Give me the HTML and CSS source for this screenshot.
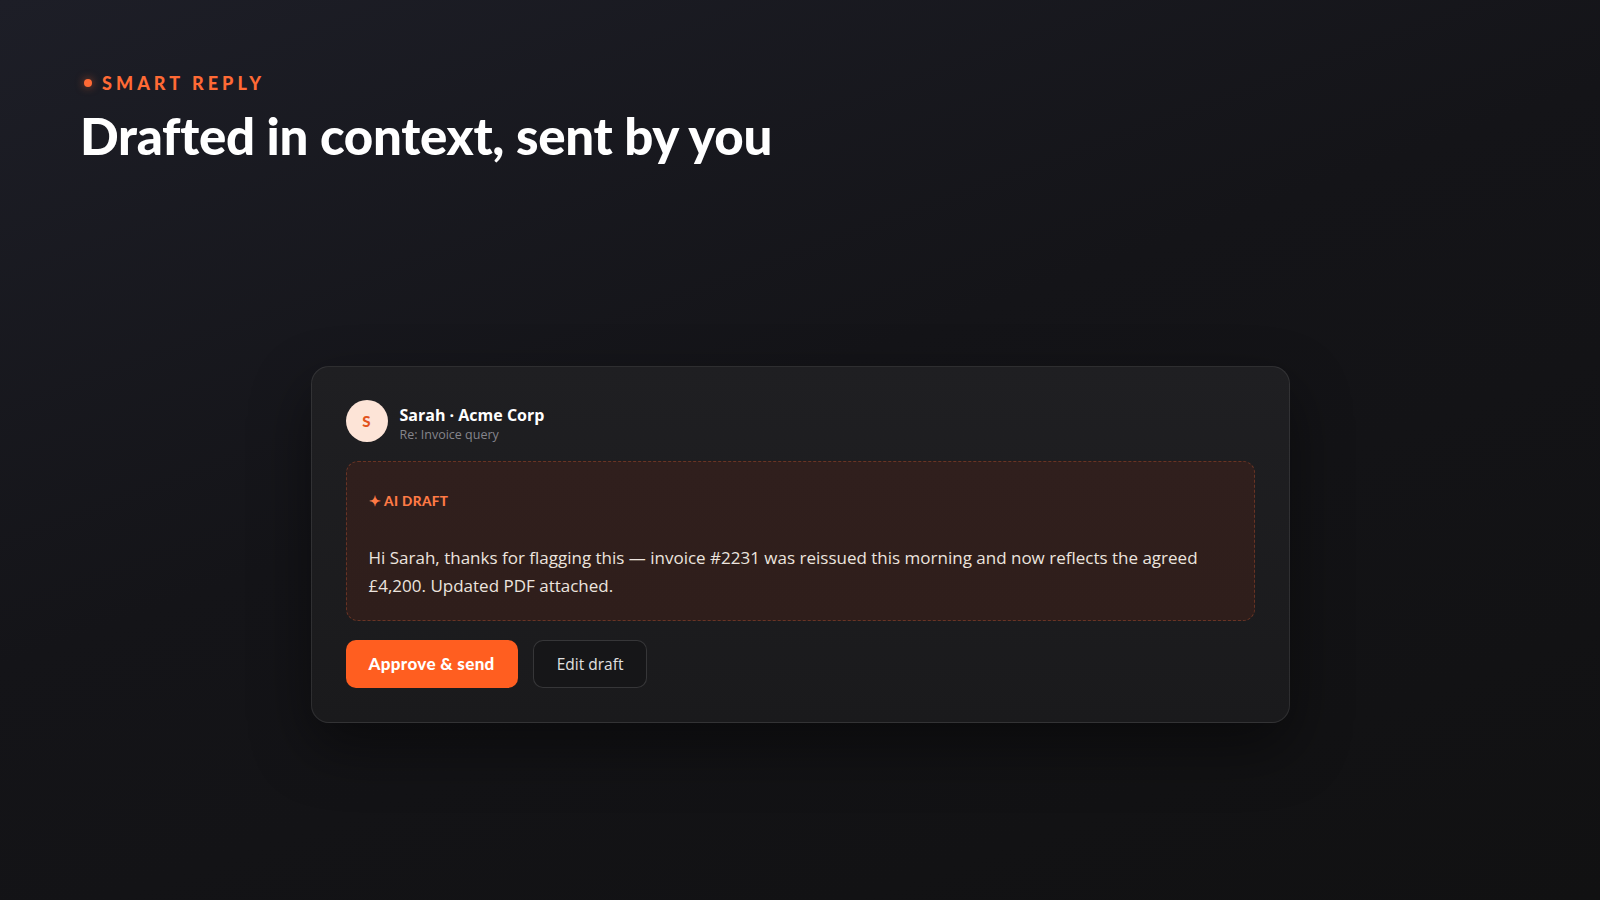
FILE: index.html
```html
<!DOCTYPE html>
<html lang="en">
<head>
    <meta charset="UTF-8">
    <meta name="viewport" content="width=device-width, initial-scale=1.0">
    <title>Smart Reply</title>
    <link rel="stylesheet" href="styles.css">
</head>
<body>

<div class="page">
    <!-- Section heading -->
    <header class="intro">
        <div class="eyebrow"><span class="eyebrow-dot"></span>SMART REPLY</div>
        <h1>Drafted in context, sent by you</h1>
    </header>

    <main class="stage">
        <div class="reply-card">
            <div class="sender">
                <div class="avatar">S</div>
                <div class="sender-info">
                    <div class="sender-name">Sarah · Acme Corp</div>
                    <div class="sender-subject">Re: Invoice query</div>
                </div>
            </div>

            <div class="draft">
                <div class="draft-label">✦ AI DRAFT</div>
                <p class="draft-text">Hi Sarah, thanks for flagging this — invoice #2231 was reissued this morning and now reflects the agreed £4,200. Updated PDF attached.</p>
            </div>

            <div class="actions">
                <button class="btn btn-primary">Approve &amp; send</button>
                <button class="btn btn-ghost">Edit draft</button>
            </div>
        </div>
    </main>
</div>

</body>
</html>
```

FILE: styles.css
```css
/* Base page */
html, body {
    height: 100%;
}

body {
    margin: 0;
    font-family: "Open Sans", "Noto Sans", sans-serif;
    color: #f2f2f2;
    background: linear-gradient(160deg, #1d1e27 0%, #141418 45%, #111112 100%);
}

.page {
    height: 100%;
    box-sizing: border-box;
    padding: 72px 80px 0;
    display: flex;
    flex-direction: column;
}

/* Heading block */
.eyebrow {
    display: flex;
    align-items: center;
    gap: 10px;
    font-family: Lato, sans-serif;
    font-weight: 900;
    font-size: 18px;
    letter-spacing: 0.225em;
    color: #ff6a35;
    line-height: 22px;
}

.eyebrow-dot {
    width: 8px;
    height: 8px;
    border-radius: 50%;
    background: #ff6a35;
    margin-left: 4px;
    box-shadow: 0 0 8px rgba(255, 106, 53, 0.6);
}

h1 {
    margin: 12px 0 0;
    font-family: Lato, sans-serif;
    font-weight: 900;
    font-size: 51px;
    line-height: 60px;
    letter-spacing: -0.006em;
    color: #ffffff;
}

/* Card area */
.stage {
    flex: 1;
    display: flex;
    justify-content: center;
    align-items: center;
    padding-top: 22px;
}

.reply-card {
    width: 909px;
    padding: 31px 34px 34px;
    background: linear-gradient(180deg, #1f1f22 0%, #1a1a1c 100%);
    border: 1px solid rgba(255, 255, 255, 0.09);
    border-radius: 18px;
    box-shadow: 0 24px 60px rgba(0, 0, 0, 0.45);
}

.sender {
    display: flex;
    align-items: center;
    gap: 12px;
}

.sender-info {
    padding-top: 6px;
}

.avatar {
    width: 42px;
    height: 42px;
    border-radius: 50%;
    background: #fde4d7;
    color: #e2531d;
    font-family: Lato, sans-serif;
    font-weight: 900;
    font-size: 15px;
    display: flex;
    align-items: center;
    justify-content: center;
}

.sender-name {
    font-weight: 700;
    font-size: 16px;
    line-height: 22px;
    color: #ffffff;
}

.sender-subject {
    font-size: 12.5px;
    line-height: 18px;
    color: #85858c;
}

/* Draft box */
.draft {
    margin-top: 17px;
    padding: 30px 22px 20px;
    background: linear-gradient(180deg, #301f1d 0%, #2f1e1b 100%);
    border: 1px dashed rgba(255, 110, 60, 0.28);
    border-radius: 12px;
}

.draft-label {
    font-family: Lato, sans-serif;
    font-weight: 900;
    font-size: 13.5px;
    line-height: 18px;
    letter-spacing: 0.03em;
    color: #ff7a45;
}

.draft-text {
    margin: 34px 0 0;
    font-size: 17px;
    line-height: 28px;
    color: #ece4df;
}

/* Buttons */
.actions {
    margin-top: 19px;
    display: flex;
    gap: 15px;
}

.btn {
    height: 48px;
    border-radius: 10px;
    font-size: 16px;
    cursor: pointer;
}

.btn-primary {
    padding: 0 23px;
    background: #ff5e20;
    border: none;
    color: #ffffff;
    font-family: Lato, sans-serif;
    font-weight: 900;
    font-size: 17px;
    letter-spacing: 0.02em;
}

.btn-ghost {
    padding: 0 23px;
    background: #161618;
    border: 1px solid rgba(255, 255, 255, 0.14);
    color: #e0e0e0;
    font-family: "Open Sans", sans-serif;
    font-size: 15.5px;
}
```
